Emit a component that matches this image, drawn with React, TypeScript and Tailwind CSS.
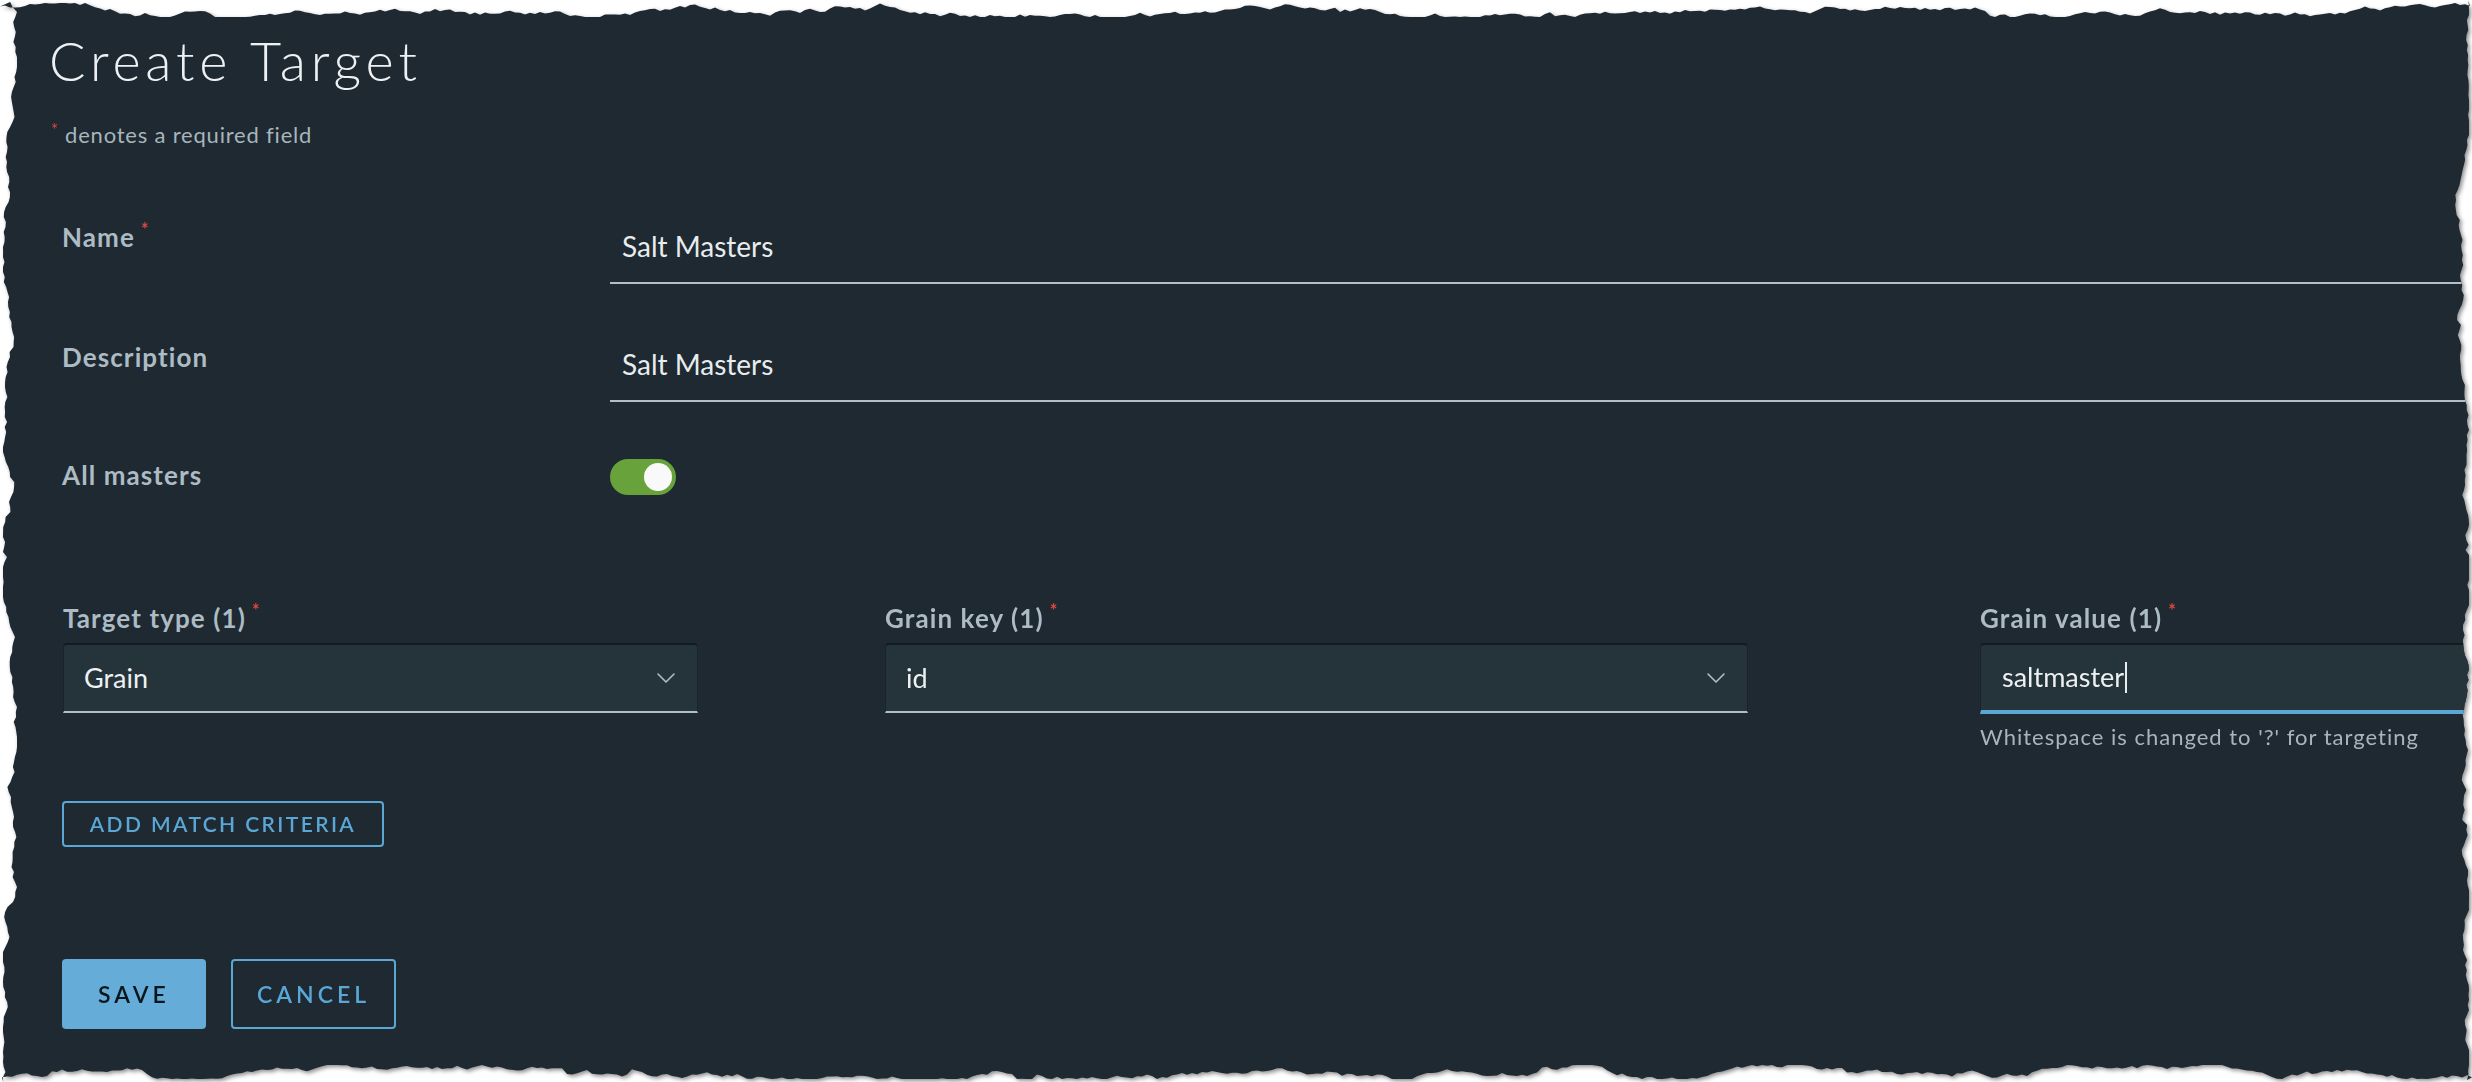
import { ChevronDown } from 'lucide-react';

const W = 2472;
const H = 1082;

// torn paper outline for the screenshot panel
function tornEdge(w: number, h: number) {
  let seed = 11;
  const rnd = () => {
    seed = (seed * 16807) % 2147483647;
    return seed / 2147483647;
  };
  let v = 9;
  const step = () => {
    v += (rnd() - 0.5) * 5;
    if (rnd() > 0.9) v += (rnd() - 0.5) * 8;
    v = Math.max(3, Math.min(17, v));
    return v.toFixed(1);
  };
  const pts: string[] = [];
  for (let x = 0; x <= w; x += 5) pts.push(`${x}px ${step()}px`);
  for (let y = 0; y <= h; y += 5) pts.push(`${w - Number(step())}px ${y}px`);
  for (let x = w; x >= 0; x -= 5) pts.push(`${x}px ${h - Number(step())}px`);
  for (let y = h; y >= 0; y -= 5) pts.push(`${step()}px ${y}px`);
  return `polygon(${pts.join(',')})`;
}

const Req = () => <span className="text-[#e0473d] text-[18px] align-top ml-[6px] relative -top-[4px]">*</span>;

const labelCls = 'text-[26px] font-bold leading-none tracking-[1.1px] text-[#adbbc4]';

function Field({ label, required, children }: { label: string; required?: boolean; children: React.ReactNode }) {
  return (
    <div className="flex">
      <div className={`w-[561px] pl-[13px] ${labelCls}`}>
        {label}
        {required && <Req />}
      </div>
      <div className="flex-1">{children}</div>
    </div>
  );
}

function TextLine({ value }: { value: string }) {
  return (
    <div className="h-[60px] border-b-2 border-[#b3bfc7] pl-[12px] pt-[8px] text-[28px] leading-none text-[#e8ecef]">
      {value}
    </div>
  );
}

function SelectBox({ value, width }: { value: string; width: string }) {
  return (
    <div
      className={`${width} h-[70px] flex items-center justify-between rounded-t-[4px] border-t-2 border-x border-t-[#131b20] border-x-[#1a242a] border-b-2 border-b-[#b3bfc7] bg-[#25333b] pl-[20px] pr-[15px] text-[27px] text-[#eef1f3]`}
    >
      <span>{value}</span>
      <ChevronDown size={32} strokeWidth={1.2} className="text-[#b3bfc7]" />
    </div>
  );
}

export default function App() {
  return (
    <div className="w-[2472px] h-[1082px] bg-white overflow-hidden" style={{ fontFamily: 'Lato, "Open Sans", sans-serif' }}>
      <div className="drop-shadow-[2px_2px_2px_rgba(0,0,0,0.45)]">
        <div className="h-[1082px] w-[2472px] bg-[#1e2931] pl-[49px] pt-[34px]" style={{ clipPath: tornEdge(W, H) }}>
          <h1 className="text-[54px] font-light leading-none tracking-[4.8px] text-[#eef1f3]">Create Target</h1>
          <p className="mt-[36px] pl-[2px] text-[22px] leading-none tracking-[0.8px] text-[#a8b5bd]">
            <span className="text-[#e0473d] text-[17px] align-top relative -top-[3px] mr-[6px]">*</span>
            denotes a required field
          </p>

          <div className="mt-[78px]">
            <Field label="Name" required>
              <TextLine value="Salt Masters" />
            </Field>
          </div>
          <div className="mt-[60px]">
            <Field label="Description">
              <div className="-mt-[2px]">
                <TextLine value="Salt Masters" />
              </div>
            </Field>
          </div>
          <div className="mt-[60px]">
            <Field label="All masters">
              <div className="-mt-[3px] flex h-[36px] w-[66px] items-center justify-end rounded-full bg-[#67a33a] pr-[4px]">
                <div className="h-[28px] w-[28px] rounded-full bg-[#f9f9f9]" />
              </div>
            </Field>
          </div>

          <div className="mt-[110px] grid grid-cols-[822px_1095px_1fr] pl-[14px]">
            <div>
              <div className={labelCls}>
                Target type (1)
                <Req />
              </div>
              <div className="mt-[12px]">
                <SelectBox value="Grain" width="w-[635px]" />
              </div>
            </div>
            <div>
              <div className={labelCls}>
                Grain key (1)
                <Req />
              </div>
              <div className="mt-[12px]">
                <SelectBox value="id" width="w-[863px]" />
              </div>
            </div>
            <div>
              <div className={labelCls}>
                Grain value (1)
                <Req />
              </div>
              <div className="mt-[12px] flex h-[71px] items-center rounded-t-[4px] border-t-2 border-l border-t-[#131b20] border-l-[#1a242a] border-b-4 border-b-[#5aa7d6] bg-[#25333b] pl-[21px] text-[27px] text-[#eef1f3]">
                saltmaster
                <span className="ml-[1px] inline-block h-[31px] w-[2px] bg-[#e8ecef]" />
              </div>
              <p className="mt-[12px] text-[22px] leading-none tracking-[1px] text-[#a8b5bd]">
                Whitespace is changed to '?' for targeting
              </p>
            </div>
          </div>

          <button className="mt-[53px] ml-[13px] h-[46px] w-[322px] rounded-[4px] border-2 border-[#5aa7d6] text-[21px] font-semibold tracking-[2.4px] text-[#5aa7d6]">
            ADD MATCH CRITERIA
          </button>

          <div className="mt-[112px] ml-[13px] flex gap-[25px]">
            <button className="h-[70px] w-[144px] rounded-[4px] bg-[#65acd8] text-[23px] font-semibold tracking-[4px] text-[#0b161c]">
              SAVE
            </button>
            <button className="h-[70px] w-[165px] rounded-[4px] border-2 border-[#5aa7d6] text-[23px] font-semibold tracking-[4px] text-[#5aa7d6]">
              CANCEL
            </button>
          </div>
        </div>
      </div>
    </div>
  );
}
